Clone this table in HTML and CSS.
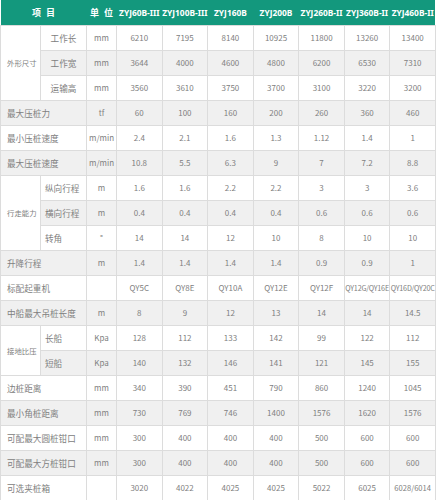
FILE: index.html
```html
<!DOCTYPE html>
<html lang="zh">
<head>
<meta charset="utf-8">
<link rel="stylesheet" href="styles.css">
</head>
<body>
<table class="spec">
<colgroup>
<col class="c-grp"><col class="c-sub"><col class="c-unit">
<col class="c-d"><col class="c-d"><col class="c-d"><col class="c-d"><col class="c-d"><col class="c-d"><col class="c-d">
</colgroup>
<thead>
<tr><th colspan="2" class="hz">项 目</th><th class="hz">单 位</th><th>ZYJ60B-III</th><th>ZYJ100B-III</th><th>ZYJ160B</th><th>ZYJ200B</th><th>ZYJ260B-II</th><th>ZYJ360B-II</th><th>ZYJ460B-II</th></tr>
</thead>
<tbody>
<tr><td rowspan="3" class="grp">外形尺寸</td><td class="sub c">工作长</td><td>mm</td><td>6210</td><td>7195</td><td>8140</td><td>10925</td><td>11800</td><td>13260</td><td>13400</td></tr>
<tr class="alt"><td class="sub c">工作宽</td><td>mm</td><td>3644</td><td>4000</td><td>4600</td><td>4800</td><td>6200</td><td>6530</td><td>7310</td></tr>
<tr><td class="sub c">运输高</td><td>mm</td><td>3560</td><td>3610</td><td>3750</td><td>3700</td><td>3100</td><td>3220</td><td>3200</td></tr>
<tr class="alt"><td colspan="2" class="lbl">最大压桩力</td><td>tf</td><td>60</td><td>100</td><td>160</td><td>200</td><td>260</td><td>360</td><td>460</td></tr>
<tr><td colspan="2" class="lbl">最小压桩速度</td><td>m/min</td><td>2.4</td><td>2.1</td><td>1.6</td><td>1.3</td><td>1.12</td><td>1.4</td><td>1</td></tr>
<tr class="alt"><td colspan="2" class="lbl">最大压桩速度</td><td>m/min</td><td>10.8</td><td>5.5</td><td>6.3</td><td>9</td><td>7</td><td>7.2</td><td>8.8</td></tr>
<tr><td rowspan="3" class="grp">行走能力</td><td class="sub">纵向行程</td><td>m</td><td>1.6</td><td>1.6</td><td>2.2</td><td>2.2</td><td>3</td><td>3</td><td>3.6</td></tr>
<tr class="alt"><td class="sub">横向行程</td><td>m</td><td>0.4</td><td>0.4</td><td>0.4</td><td>0.4</td><td>0.6</td><td>0.6</td><td>0.6</td></tr>
<tr><td class="sub">转角</td><td>°</td><td>14</td><td>14</td><td>12</td><td>10</td><td>8</td><td>10</td><td>10</td></tr>
<tr class="alt"><td colspan="2" class="lbl">升降行程</td><td>m</td><td>1.4</td><td>1.4</td><td>1.4</td><td>1.4</td><td>0.9</td><td>0.9</td><td>1</td></tr>
<tr><td colspan="2" class="lbl">标配起重机</td><td></td><td>QY5C</td><td>QY8E</td><td>QY10A</td><td>QY12E</td><td>QY12F</td><td class="sm">QY12G/QY16E</td><td class="sm">QY16D/QY20C</td></tr>
<tr class="alt"><td colspan="2" class="lbl">中船最大吊桩长度</td><td>m</td><td>8</td><td>9</td><td>12</td><td>13</td><td>14</td><td>14</td><td>14.5</td></tr>
<tr><td rowspan="2" class="grp">接地比压</td><td class="sub">长船</td><td>Kpa</td><td>128</td><td>112</td><td>133</td><td>142</td><td>99</td><td>122</td><td>112</td></tr>
<tr class="alt"><td class="sub">短船</td><td>Kpa</td><td>140</td><td>132</td><td>146</td><td>141</td><td>121</td><td>145</td><td>155</td></tr>
<tr><td colspan="2" class="lbl">边桩距离</td><td>mm</td><td>340</td><td>390</td><td>451</td><td>790</td><td>860</td><td>1240</td><td>1045</td></tr>
<tr class="alt"><td colspan="2" class="lbl">最小角桩距离</td><td>mm</td><td>730</td><td>769</td><td>746</td><td>1400</td><td>1576</td><td>1620</td><td>1576</td></tr>
<tr><td colspan="2" class="lbl">可配最大圆桩钳口</td><td>mm</td><td>300</td><td>400</td><td>400</td><td>400</td><td>500</td><td>600</td><td>600</td></tr>
<tr class="alt"><td colspan="2" class="lbl">可配最大方桩钳口</td><td>mm</td><td>300</td><td>400</td><td>400</td><td>400</td><td>500</td><td>600</td><td>600</td></tr>
<tr><td colspan="2" class="lbl">可选夹桩箱</td><td></td><td>3020</td><td>4022</td><td>4025</td><td>4025</td><td>5022</td><td>6025</td><td class="md">6028/6014</td></tr>
</tbody>
</table>
</body>
</html>
```
FILE: styles.css
```css
html, body {
  margin: 0;
  padding: 0;
  background: #ffffff;
}
.spec {
  border-collapse: collapse;
  table-layout: fixed;
  width: 435px;
  font-family: "Noto Sans CJK SC", "Noto Sans", sans-serif;
  color: #808080;
}
.c-grp { width: 40px; }
.c-sub { width: 46px; }
.c-unit { width: 30px; }
.c-d { width: 45.57px; }
.spec thead tr {
  height: 25px;
  background: #13987d;
}
.spec th {
  color: #ffffff;
  font-family: "Noto Sans", "Noto Sans CJK SC", sans-serif;
  font-weight: bold;
  font-size: 8.4px;
  white-space: nowrap;
  padding: 0;
  text-align: center;
  border: none;
}
.spec th.hz {
  font-family: "Noto Sans CJK SC", sans-serif;
  font-size: 9px;
  word-spacing: 3px;
}
.spec tbody tr {
  height: 25px;
  background: #ffffff;
}
.spec tbody tr.alt {
  background: #f0f0f0;
}
.spec td {
  border: 1px solid #dcdcdc;
  padding: 0;
  text-align: center;
  font-size: 8px;
  white-space: nowrap;
  overflow: hidden;
}
.spec td.lbl {
  text-align: left;
  padding-left: 6px;
  font-size: 8.6px;
}
.spec td.grp {
  text-align: left;
  padding-left: 6px;
  font-size: 7.4px;
  background: #ffffff;
}
.spec td.sub {
  text-align: left;
  padding-left: 4px;
  font-size: 8.6px;
}
.spec td.sub.c {
  text-align: center;
  padding-left: 0;
}
.spec td.sm {
  font-size: 7.2px;
  letter-spacing: -0.2px;
}
.spec td.md {
  font-size: 7.6px;
}
```
